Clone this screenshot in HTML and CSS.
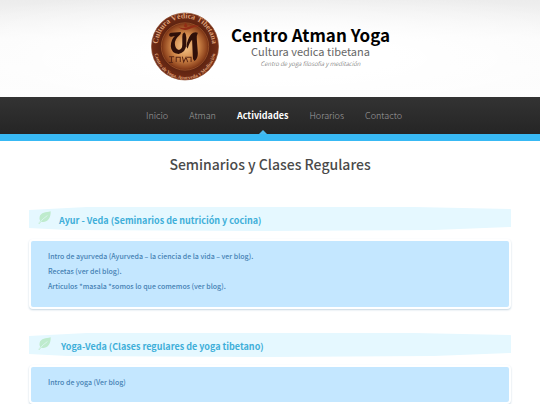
FILE: index.html
```html
<!DOCTYPE html>
<html lang="es">
<head>
<meta charset="utf-8">
<meta name="viewport" content="width=device-width, initial-scale=1">
<title>Centro Atman Yoga</title>
<link rel="stylesheet" href="styles.css">
</head>
<body>
<header class="masthead">
  <svg class="logo" viewBox="0 0 200 204" aria-hidden="true">
    <defs>
      <radialGradient id="disc" cx="50%" cy="50%" r="50%">
        <stop offset="0" stop-color="#f8c98c"/>
        <stop offset=".4" stop-color="#cf8648"/>
        <stop offset=".66" stop-color="#8b401b"/>
        <stop offset=".72" stop-color="#5f2411"/>
        <stop offset="1" stop-color="#742d16"/>
      </radialGradient>
      <path id="arc-top" d="M22 116A80 80 0 1 1 178 116"/>
      <path id="arc-bottom" d="M9 108A91 91 0 0 0 191 108"/>
    </defs>
    <circle cx="100" cy="102" r="99" fill="url(#disc)" stroke="#8a4a2c" stroke-width="2"/>
    <circle cx="100" cy="102" r="70" fill="none" stroke="#a65c30" stroke-width="2"/>
    <text class="ring-large"><textPath href="#arc-top" startOffset="50%" text-anchor="middle">Cultura Védica Tibetana</textPath></text>
    <text class="ring-small"><textPath href="#arc-bottom" startOffset="50%" text-anchor="middle">Centro de Yoga, Ayurveda y Meditación</textPath></text>
    <path d="M53 69Q53 61 60 61L88 59Q89 67 82 70Q70 80 70 94Q71 110 82 112Q92 110 92 96V73Q91 64 98 60Q105 65 104 76V96Q102 120 81 124Q59 122 58 101Q58 82 70 71L60 73Q54 74 53 69Z" fill="#301009"/>
    <path d="M104 102Q107 80 118 66Q126 57 138 61Q134 68 135 81L138 122Q138 138 128 145Q122 141 123 130L121 82Q113 89 108 109Z" fill="#301009"/>
    <path d="M80 44Q94 50 109 44Q124 36 144 41Q124 45 113 50Q94 58 80 44Z" fill="#922d16"/>
    <path d="M96 42L102 32L108 42L102 46Z" fill="#922d16"/>
    <path d="M53 132H68M60 134V149M74 132V148M74 134H86V148M92 132L96 148L103 134L108 148M106 134H118V148M53 149H64" fill="none" stroke="#5c2714" stroke-width="3"/>
  </svg>
  <div class="brand">
    <h1 class="brand-name">Centro Atman Yoga</h1>
    <p class="brand-sub">Cultura vedica tibetana</p>
    <p class="brand-tag">Centro de yoga filosofia y meditación</p>
  </div>
</header>
<nav class="menu" aria-label="Principal">
  <a href="#inicio">Inicio</a>
  <a href="#atman">Atman</a>
  <a class="active" href="#actividades" aria-current="page">Actividades</a>
  <a href="#horarios">Horarios</a>
  <a href="#contacto">Contacto</a>
</nav>
<main class="content">
  <h2 class="page-title">Seminarios y Clases Regulares</h2>
  <section class="course">
    <h3 class="course-title">
      <svg class="leaf" viewBox="0 0 40 40" aria-hidden="true"><path d="M39 1C24 5 9 4 5 18Q3 25 7 31L1 38L4 40L10 33C25 37 40 26 39 1Z" fill="#beebcd"/><path d="M4 37Q15 23 29 14" fill="none" stroke="#e5f8ff" stroke-width="2"/></svg>
      <span>Ayur - Veda (Seminarios de nutrición y cocina)</span>
    </h3>
    <div class="panel">
      <p>Intro de ayurveda (Ayurveda – la ciencia de la vida – ver blog).</p>
      <p>Recetas (ver del blog).</p>
      <p>Articulos *masala *somos lo que comemos (ver blog).</p>
    </div>
  </section>
  <section class="course">
    <h3 class="course-title">
      <svg class="leaf" viewBox="0 0 40 40" aria-hidden="true"><path d="M39 1C24 5 9 4 5 18Q3 25 7 31L1 38L4 40L10 33C25 37 40 26 39 1Z" fill="#beebcd"/><path d="M4 37Q15 23 29 14" fill="none" stroke="#e5f8ff" stroke-width="2"/></svg>
      <span>&nbsp;Yoga-Veda (Clases regulares de yoga tibetano)</span>
    </h3>
    <div class="panel panel-short">
      <p>Intro de yoga (Ver blog)</p>
    </div>
  </section>
</main>
</body>
</html>
```
FILE: styles.css
```css
* { box-sizing: border-box; }

body {
  margin: 0;
  background: #fff;
  color: #444;
  font-family: "Noto Sans CJK JP", "Noto Sans", sans-serif;
}

h1, h2, h3, p { margin: 0; }

.masthead {
  display: flex;
  justify-content: center;
  gap: 12px;
  padding: 12px 0 16px 1px;
  background: radial-gradient(ellipse 75% 70% at 50% 60%, #fff 30%, rgba(255, 255, 255, 0) 100%), linear-gradient(#ececec, #fafafa 40%, #fcfcfc);
}

.logo { width: 68px; height: 69px; }

.ring-large, .ring-small {
  font-family: "Liberation Serif", serif;
  font-weight: bold;
  fill: #dfa179;
}
.ring-large { font-size: 23px; }
.ring-small { font-size: 15px; }

.brand {
  padding-top: 13px;
  text-align: center;
}

.brand-name {
  color: #000;
  font-size: 17px;
  font-weight: 700;
  line-height: 20px;
}

.brand-sub {
  color: #666;
  font-size: 11px;
  font-weight: 400;
  line-height: 13px;
}

.brand-tag {
  color: #555;
  font-size: 6px;
  font-style: italic;
  font-weight: 300;
  line-height: 12px;
}

.menu {
  display: flex;
  justify-content: center;
  gap: 21px;
  padding-left: 8px;
  background: linear-gradient(#333, #252525);
  border-bottom: 7px solid #38b9f4;
}

.menu a {
  position: relative;
  padding-top: 1px;
  color: #a0a0a0;
  font-size: 9px;
  font-weight: 300;
  line-height: 36px;
  text-decoration: none;
}

.menu .active {
  color: #fff;
  font-weight: 700;
}

.menu .active::after {
  content: "";
  position: absolute;
  bottom: 0;
  left: 50%;
  margin-left: -4px;
  border: 4px solid transparent;
  border-top: 0;
  border-bottom-color: #4db9ee;
}

.content { padding: 11px 29px 0; }

.page-title {
  margin-bottom: 31px;
  color: #4a4a4a;
  font-size: 14px;
  font-weight: 500;
  line-height: 24px;
  text-align: center;
}

.course + .course { margin-top: 24px; }

.course-title {
  display: flex;
  align-items: center;
  gap: 8px;
  height: 24px;
  margin-bottom: 8px;
  padding: 2px 0 0 9px;
  border-radius: 4px;
  background: #e5f8ff;
  clip-path: polygon(0 3px, 12% 0, 80% 0, 100% 2px, 100% 20px, 84% 23px, 50% 24px, 8% 23px, 0 21px);
  color: #3fafd9;
  font-size: 9px;
  font-weight: 700;
}

.leaf {
  width: 13px;
  height: 13px;
  margin-bottom: 6px;
}

.panel {
  min-height: 70px;
  padding: 8px 17px 12px;
  border: 2px solid #fff;
  border-radius: 4px;
  background: #c4e7ff;
  box-shadow: 0 1px 2px #c5d5e0;
  color: #4682b4;
  font-size: 7px;
  font-weight: 500;
  line-height: 15px;
}

.panel-short { min-height: 39px; }
```
